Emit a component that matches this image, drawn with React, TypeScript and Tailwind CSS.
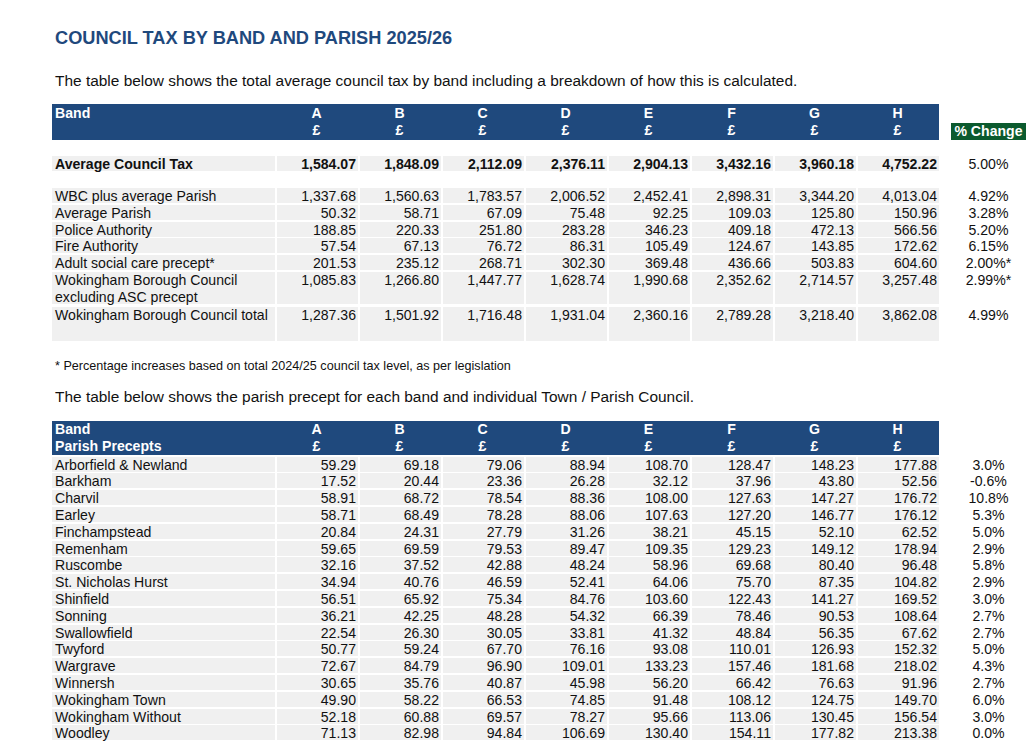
import React from "react";

const t1: { label: string; vals: string[]; pct: string }[] = [
  { label: "WBC plus average Parish", vals: ["1,337.68", "1,560.63", "1,783.57", "2,006.52", "2,452.41", "2,898.31", "3,344.20", "4,013.04"], pct: "4.92%" },
  { label: "Average Parish", vals: ["50.32", "58.71", "67.09", "75.48", "92.25", "109.03", "125.80", "150.96"], pct: "3.28%" },
  { label: "Police Authority", vals: ["188.85", "220.33", "251.80", "283.28", "346.23", "409.18", "472.13", "566.56"], pct: "5.20%" },
  { label: "Fire Authority", vals: ["57.54", "67.13", "76.72", "86.31", "105.49", "124.67", "143.85", "172.62"], pct: "6.15%" },
  { label: "Adult social care precept*", vals: ["201.53", "235.12", "268.71", "302.30", "369.48", "436.66", "503.83", "604.60"], pct: "2.00%*" },
];

const t2: [string, string[], string][] = [
  ["Arborfield & Newland", ["59.29", "69.18", "79.06", "88.94", "108.70", "128.47", "148.23", "177.88"], "3.0%"],
  ["Barkham", ["17.52", "20.44", "23.36", "26.28", "32.12", "37.96", "43.80", "52.56"], "-0.6%"],
  ["Charvil", ["58.91", "68.72", "78.54", "88.36", "108.00", "127.63", "147.27", "176.72"], "10.8%"],
  ["Earley", ["58.71", "68.49", "78.28", "88.06", "107.63", "127.20", "146.77", "176.12"], "5.3%"],
  ["Finchampstead", ["20.84", "24.31", "27.79", "31.26", "38.21", "45.15", "52.10", "62.52"], "5.0%"],
  ["Remenham", ["59.65", "69.59", "79.53", "89.47", "109.35", "129.23", "149.12", "178.94"], "2.9%"],
  ["Ruscombe", ["32.16", "37.52", "42.88", "48.24", "58.96", "69.68", "80.40", "96.48"], "5.8%"],
  ["St. Nicholas Hurst", ["34.94", "40.76", "46.59", "52.41", "64.06", "75.70", "87.35", "104.82"], "2.9%"],
  ["Shinfield", ["56.51", "65.92", "75.34", "84.76", "103.60", "122.43", "141.27", "169.52"], "3.0%"],
  ["Sonning", ["36.21", "42.25", "48.28", "54.32", "66.39", "78.46", "90.53", "108.64"], "2.7%"],
  ["Swallowfield", ["22.54", "26.30", "30.05", "33.81", "41.32", "48.84", "56.35", "67.62"], "2.7%"],
  ["Twyford", ["50.77", "59.24", "67.70", "76.16", "93.08", "110.01", "126.93", "152.32"], "5.0%"],
  ["Wargrave", ["72.67", "84.79", "96.90", "109.01", "133.23", "157.46", "181.68", "218.02"], "4.3%"],
  ["Winnersh", ["30.65", "35.76", "40.87", "45.98", "56.20", "66.42", "76.63", "91.96"], "2.7%"],
  ["Wokingham Town", ["49.90", "58.22", "66.53", "74.85", "91.48", "108.12", "124.75", "149.70"], "6.0%"],
  ["Wokingham Without", ["52.18", "60.88", "69.57", "78.27", "95.66", "113.06", "130.45", "156.54"], "3.0%"],
  ["Woodley", ["71.13", "82.98", "94.84", "106.69", "130.40", "154.11", "177.82", "213.38"], "0.0%"],
];

const letters = ["A", "B", "C", "D", "E", "F", "G", "H"];

function Row({
  label,
  vals,
  pct,
  bold,
  h = "h-[15px]",
  lh = "leading-[17px]",
}: {
  label: React.ReactNode;
  vals: string[];
  pct: string;
  bold?: boolean;
  h?: string;
  lh?: string;
}) {
  return (
    <div className={`flex ${h} ${lh}`}>
      <div className={`w-[223px] bg-[#f0f0f0] pl-[3px] ${bold ? "font-bold" : ""}`}>{label}</div>
      {vals.map((v, i) => (
        <div key={i} className={`ml-[2px] w-[81px] bg-[#f0f0f0] pr-[2px] text-right ${bold ? "font-bold" : ""}`}>
          {v}
        </div>
      ))}
      <div className="ml-[12px] w-[75px] text-center">{pct}</div>
    </div>
  );
}

export default function App() {
  return (
    <div
      className="min-h-[748px] w-[1032px] bg-white pl-[52px] pt-[27px] text-[14.1px] text-[#111]"
      style={{ fontFamily: '"Liberation Sans", Arial, sans-serif' }}
    >
      <div className="pl-[3px] text-[18.2px] font-bold leading-[22px] text-[#1f497d]">
        COUNCIL TAX BY BAND AND PARISH 2025/26
      </div>
      <div className="mt-[23px] pl-[3px] text-[15.45px] leading-[18px]">
        The table below shows the total average council tax by band including a breakdown of how this is calculated.
      </div>

      {/* Table 1 header */}
      <div className="mt-[14px] flex items-end">
        <div className="grid h-[36px] w-[887px] grid-cols-[225px_repeat(8,83px)] bg-[#1f497d] pt-[1px] font-bold leading-[17px] text-white">
          <div className="pl-[3px]">Band</div>
          {letters.map((l) => (
            <div key={l} className="pr-[4px] text-center">
              {l}
              <br />£
            </div>
          ))}
        </div>
        <div className="ml-[12px] h-[17px] w-[75px] bg-[#0b5a2e] text-center font-bold leading-[17px] text-white">
          % Change
        </div>
      </div>

      <div className="mt-[16px]">
        <Row
          label="Average Council Tax"
          bold
          vals={["1,584.07", "1,848.09", "2,112.09", "2,376.11", "2,904.13", "3,432.16", "3,960.18", "4,752.22"]}
          pct="5.00%"
        />
      </div>

      <div className="mt-[17px] flex flex-col gap-[1.8px]">
        {t1.map((r) => (
          <Row key={r.label} label={r.label} vals={r.vals} pct={r.pct} />
        ))}
        <Row
          label={
            <>
              Wokingham Borough Council
              <br />
              excluding ASC precept
            </>
          }
          vals={["1,085.83", "1,266.80", "1,447.77", "1,628.74", "1,990.68", "2,352.62", "2,714.57", "3,257.48"]}
          pct="2.99%*"
          h="h-[31.8px] pt-[0.5px]"
          lh="leading-[16.8px]"
        />
        <Row
          label="Wokingham Borough Council total"
          vals={["1,287.36", "1,501.92", "1,716.48", "1,931.04", "2,360.16", "2,789.28", "3,218.40", "3,862.08"]}
          pct="4.99%"
          h="h-[35px] pt-[1.5px]"
          lh="leading-[16.8px]"
        />
      </div>

      <div className="mt-[18px] pl-[3px] text-[12.6px] leading-[14px]">
        * Percentage increases based on total 2024/25 council tax level, as per legislation
      </div>
      <div className="mt-[15px] pl-[3px] text-[15.45px] leading-[18px]">
        The table below shows the parish precept for each band and individual Town / Parish Council.
      </div>

      {/* Table 2 header */}
      <div className="mt-[15px] grid h-[34px] w-[887px] grid-cols-[225px_repeat(8,83px)] bg-[#1f497d] font-bold leading-[17px] text-white">
        <div className="pl-[3px]">
          Band
          <br />
          Parish Precepts
        </div>
        {letters.map((l) => (
          <div key={l} className="pr-[4px] text-center">
            {l}
            <br />£
          </div>
        ))}
      </div>

      <div className="mt-[2px] flex flex-col gap-[1.8px]">
        {t2.map(([label, vals, pct]) => (
          <Row key={label} label={label} vals={vals} pct={pct} />
        ))}
      </div>
    </div>
  );
}
